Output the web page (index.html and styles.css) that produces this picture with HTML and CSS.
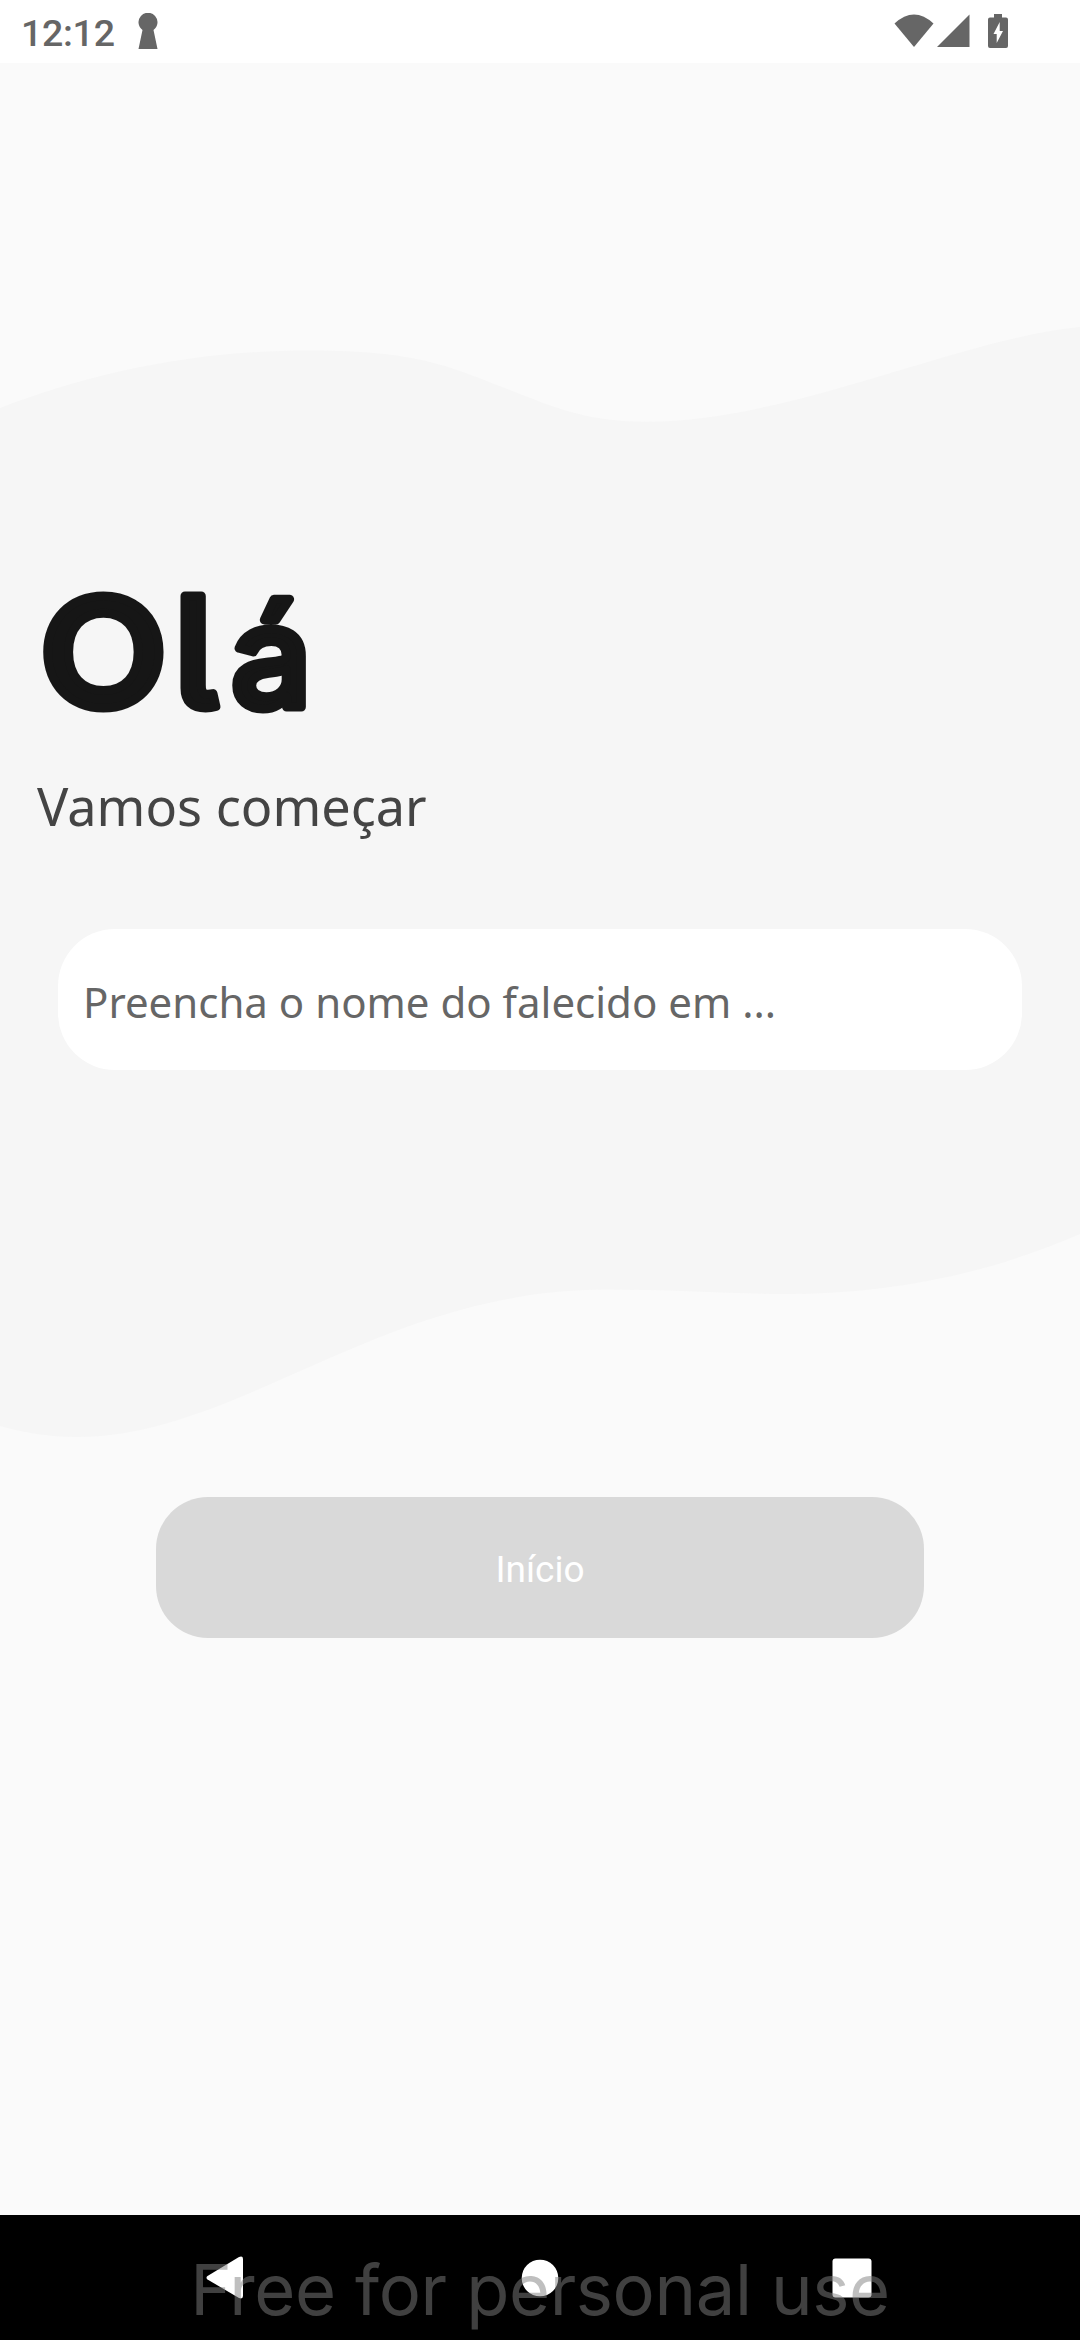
FILE: index.html
```
<!DOCTYPE html>
<html lang="pt">
<head>
<meta charset="UTF-8">
<meta name="viewport" content="width=device-width, initial-scale=1.0">
<title>Olá</title>
<link rel="stylesheet" href="styles.css">
</head>
<body>

<div class="status-bar">
  <span class="clock">12:12</span>
  <svg class="keyhole" width="20" height="37" viewBox="0 0 20 37">
    <path d="M4.500 17 A9.500 9.500 0 1 1 15.500 17 L19.500 36 H0.500 Z"/>
  </svg>
  <div class="status-icons">
    <svg width="40" height="34" viewBox="0 0 40 34">
      <path d="M0.500 9.500 Q20 -8.500 39.500 9.500 L20 33 Z"/>
    </svg>
    <svg class="signal" width="33" height="34" viewBox="0 0 33 34">
      <path d="M0 33 L32.500 0.500 V33 Z"/>
    </svg>
    <svg class="battery" width="20" height="34" viewBox="0 0 20 34">
      <path fill-rule="evenodd" d="M6 0 H14 V3.500 H18 Q20 3.500 20 5.500 V32 Q20 34 18 34 H2 Q0 34 0 32 V5.500 Q0 3.500 2 3.500 H6 Z M11.700 8 L5.500 20 H8.700 V29 L15 17 H11.700 Z"/>
    </svg>
  </div>
</div>

<main class="screen">
  <!-- Wavy band behind the form -->
  <svg class="wave" viewBox="0 0 1080 1112" width="1080" height="1112">
    <path transform="translate(0 -326)" d="M0 408 C90 374 190 350.500 310 350.500 C420 350.500 450 367 510 390 C560 410 590 421.700 647 421.700 C790 421.700 960 338 1080 327 V1234 C985 1275 890 1294 785 1294 C735 1294 670 1289.600 606 1289.600 C380 1289.600 240 1437 76 1437 C50 1437 25 1433 0 1426 Z"/>
  </svg>

  <h1 class="title">
    <svg width="400" height="230" viewBox="0 0 400 230">
      <text y="166.500"><tspan x="4">O</tspan><tspan class="tail" x="136">l</tspan><tspan class="small" x="193">á</tspan></text>
    </svg>
  </h1>
  <p class="subtitle">Vamos começar</p>
  <div class="name-field">Preencha o nome do falecido em ...</div>
  <button class="start-button">Início</button>
</main>

<nav class="nav-bar">
  <svg width="38" height="44" viewBox="0 0 38 44">
    <path d="M1.500 20 L33 1 Q37 -0.500 37 3 V40 Q37 43.500 33 42 L1.500 23.500 Q-0.500 21.700 1.500 20 Z"/>
  </svg>
  <svg class="home" width="38" height="38" viewBox="0 0 38 38">
    <circle cx="19" cy="19" r="18.300"/>
  </svg>
  <svg width="40" height="40" viewBox="0 0 40 40">
    <rect x="0.500" y="0.500" width="39" height="39" rx="3"/>
  </svg>
  <span class="watermark">Free for personal use</span>
</nav>

</body>
</html>
```
FILE: styles.css
```
/* General Styling */
body {
  display: flex;
  flex-direction: column;
  height: 100vh;
  margin: 0;
  background-color: #fafafa;
  font-family: "Noto Sans", sans-serif;
  overflow: hidden;
}

svg {
  display: block;
}

/* Status bar */
.status-bar {
  display: flex;
  align-items: flex-start;
  box-sizing: border-box;
  height: 63px;
  padding: 13px 72px 0 21px;
  background-color: #fff;
  fill: #666;
}

.clock {
  width: 117px;
  margin-top: -2px;
  font-family: Roboto, sans-serif;
  font-size: 37.500px;
  font-weight: 500;
  line-height: 44px;
  letter-spacing: -0.300px;
  color: #666;
}

.status-icons {
  display: flex;
  margin-left: auto;
  padding-top: 1px;
}

.signal {
  margin-left: 3px;
}

.battery {
  margin-left: 18px;
}

/* Welcome screen */
.screen {
  display: flex;
  flex: 1;
  flex-direction: column;
  position: relative;
}

.wave {
  position: absolute;
  top: 263px;
  left: 0;
  z-index: -1;
  fill: #f6f6f6;
}

.title {
  margin: 477px 0 0 38px;
}

.title text {
  font-family: Lato, sans-serif;
  font-size: 152px;
  font-weight: 700;
  fill: #161616;
  stroke: #161616;
  stroke-width: 9px;
  stroke-linejoin: round;
}

/* Lowercase l with a curved tail */
.title .tail {
  font-family: Inter, sans-serif;
  font-weight: 500;
  font-feature-settings: "cv05";
}

.title .small {
  font-family: Inter, sans-serif;
  font-size: 142px;
  font-weight: 500;
}

.subtitle {
  margin: 0 0 0 37px;
  font-size: 52.250px;
  line-height: 72px;
  color: #444;
}

.name-field {
  box-sizing: border-box;
  height: 141px;
  margin: 87px 58px 0;
  padding: 2px 25px 0;
  border-radius: 57px;
  background-color: #fff;
  font-size: 42px;
  line-height: 141px;
  color: #666;
}

.start-button {
  width: 768px;
  height: 141px;
  margin: 427px auto 0;
  padding: 4px 0 0;
  border: 0;
  border-radius: 52px;
  background-color: #d9d9d9;
  font-family: Roboto, sans-serif;
  font-size: 37px;
  color: #fff;
}

/* Navigation bar */
.nav-bar {
  display: flex;
  justify-content: space-between;
  align-items: center;
  position: relative;
  box-sizing: border-box;
  height: 125px;
  padding: 0 208px 0 206px;
  background-color: #000;
  fill: #fff;
}

.home {
  margin-left: 3px;
}

.watermark {
  position: absolute;
  top: 32px;
  left: 0;
  width: 100%;
  font-family: Inter, sans-serif;
  font-size: 70.500px;
  line-height: 86px;
  letter-spacing: -0.400px;
  text-align: center;
  white-space: nowrap;
  color: rgba(128, 128, 128, 0.5);
}
```
